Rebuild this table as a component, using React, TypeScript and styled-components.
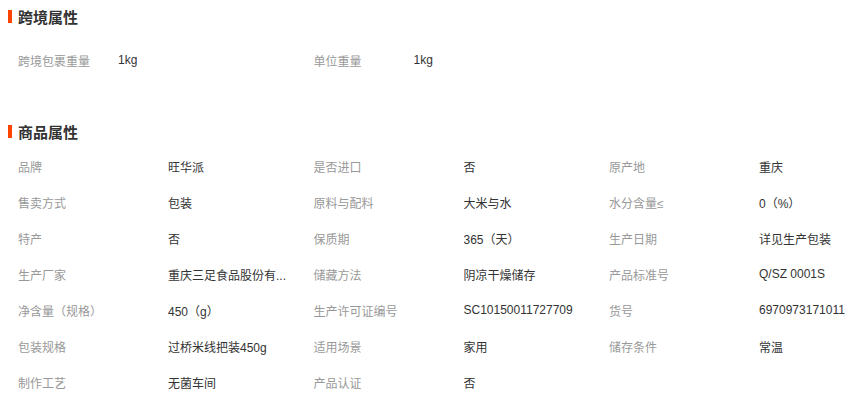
import styled, { createGlobalStyle } from 'styled-components'

const GlobalStyle = createGlobalStyle`
  body {
    margin: 0;
    background: #fff;
    font-family: "Liberation Sans", "Noto Sans CJK SC", sans-serif;
  }
`

const Page = styled.div`
  width: 862px;
  height: 394px;
  overflow: hidden;
`

const Section = styled.section<{ $gapBelow: number }>`
  margin-bottom: ${p => p.$gapBelow}px;
`

const SectionTitle = styled.h3`
  display: flex;
  align-items: center;
  gap: 6px;
  height: 33px;
  margin: 0;
  padding-left: 8px;
  font-size: 15px;
  font-weight: 700;
  color: #333;

  &::before {
    content: '';
    width: 4px;
    height: 13px;
    background: #ff4400;
  }
`

const Grid = styled.div<{ $offset: number }>`
  display: grid;
  grid-template-columns: repeat(3, 295.5px);
  padding-left: 18px;
  margin-top: ${p => p.$offset}px;
`

const Item = styled.div`
  display: flex;
  align-items: center;
  height: 36px;
  font-size: 12px;
  white-space: nowrap;
`

const Label = styled.span<{ $width: number }>`
  width: ${p => p.$width}px;
  flex-shrink: 0;
  color: #999;
`

const Value = styled.span`
  max-width: 130px;
  overflow: hidden;
  text-overflow: ellipsis;
  color: #333;
`

type Attr = [string, string]

const CROSS_BORDER: Attr[] = [
  ['跨境包裹重量', '1kg'],
  ['单位重量', '1kg'],
]

// values come pre-shortened from the listing, as shown on the page
const PRODUCT: Attr[] = [
  ['品牌', '旺华派'],
  ['是否进口', '否'],
  ['原产地', '重庆'],
  ['售卖方式', '包装'],
  ['原料与配料', '大米与水'],
  ['水分含量≤', '0（%）'],
  ['特产', '否'],
  ['保质期', '365（天）'],
  ['生产日期', '详见生产包装'],
  ['生产厂家', '重庆三足食品股份有...'],
  ['储藏方法', '阴凉干燥储存'],
  ['产品标准号', 'Q/SZ 0001S'],
  ['净含量（规格）', '450（g）'],
  ['生产许可证编号', 'SC10150011727709'],
  ['货号', '6970973171011'],
  ['包装规格', '过桥米线把装450g'],
  ['适用场景', '家用'],
  ['储存条件', '常温'],
  ['制作工艺', '无菌车间'],
  ['产品认证', '否'],
]

function AttrGrid({ items, labelWidth, offset }: { items: Attr[]; labelWidth: number; offset: number }) {
  return (
    <Grid $offset={offset}>
      {items.map(([label, value]) => (
        <Item key={label}>
          <Label $width={labelWidth}>{label}</Label>
          <Value>{value}</Value>
        </Item>
      ))}
    </Grid>
  )
}

export default function App() {
  return (
    <Page>
      <GlobalStyle />
      <Section $gapBelow={37}>
        <SectionTitle>跨境属性</SectionTitle>
        <AttrGrid items={CROSS_BORDER} labelWidth={100} offset={9} />
      </Section>
      <Section $gapBelow={0}>
        <SectionTitle>商品属性</SectionTitle>
        <AttrGrid items={PRODUCT} labelWidth={150} offset={0} />
      </Section>
    </Page>
  )
}
